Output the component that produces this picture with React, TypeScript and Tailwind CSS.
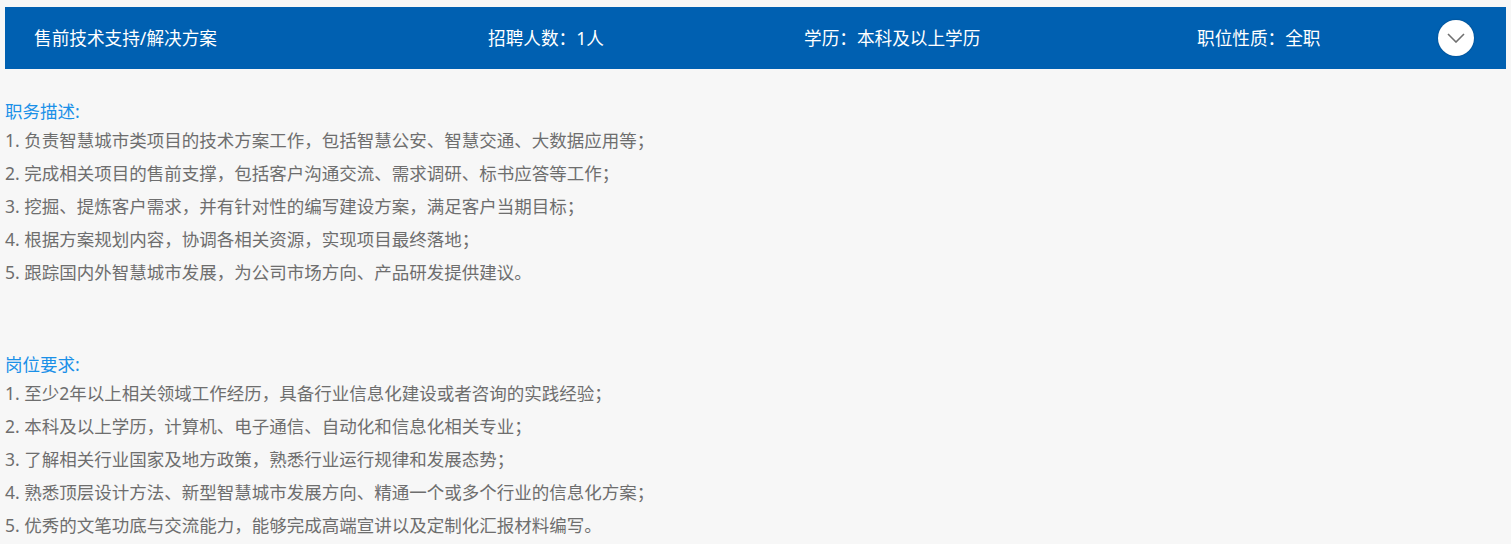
const A = ["1. 负责智慧城市类项目的技术方案工作，包括智慧公安、智慧交通、大数据应用等；","2. 完成相关项目的售前支撑，包括客户沟通交流、需求调研、标书应答等工作；","3. 挖掘、提炼客户需求，并有针对性的编写建设方案，满足客户当期目标；","4. 根据方案规划内容，协调各相关资源，实现项目最终落地；","5. 跟踪国内外智慧城市发展，为公司市场方向、产品研发提供建议。"];
const B = ["1. 至少2年以上相关领域工作经历，具备行业信息化建设或者咨询的实践经验；","2. 本科及以上学历，计算机、电子通信、自动化和信息化相关专业；","3. 了解相关行业国家及地方政策，熟悉行业运行规律和发展态势；","4. 熟悉顶层设计方法、新型智慧城市发展方向、精通一个或多个行业的信息化方案；","5. 优秀的文笔功底与交流能力，能够完成高端宣讲以及定制化汇报材料编写。"];

function Block({ title, items }: { title: string; items: string[] }) {
  return (
    <div>
      <div className="text-[#1a90e8] h-[25px] leading-[25px]">{title}</div>
      {items.map((t) => (
        <div key={t} className="h-[33px] leading-[33px] whitespace-nowrap">{t}</div>
      ))}
    </div>
  );
}

export default function App() {
  return (
    <div className="w-[1511px] h-[544px] overflow-hidden bg-[#f7f7f7] pt-[7px] px-[5px] text-[17.5px] text-[#6e6e6e] font-['Noto_Sans','Noto_Sans_CJK_SC',sans-serif]">
      <div className="h-[62px] bg-[#0060b1] text-white text-[17.65px] flex items-center pl-[29px]">
        <div className="w-[454px]">售前技术支持/解决方案</div>
        <div className="w-[316px]">招聘人数：1人</div>
        <div className="w-[393px]">学历：本科及以上学历</div>
        <div className="w-[241px]">职位性质：全职</div>
        <div className="w-[36px] h-[36px] rounded-full bg-white shadow-[0_0_2px_rgba(0,0,0,0.3)] flex items-center justify-center">
          <svg width="18" height="10" viewBox="0 0 18 10" fill="none" stroke="#707070" strokeWidth="1.6"><path d="M1 1l8 8 8-8" /></svg>
        </div>
      </div>
      <div className="pt-[30px]">
        <Block title="职务描述:" items={A} />
        <div className="h-[63px]" />
        <Block title="岗位要求:" items={B} />
      </div>
    </div>
  );
}
